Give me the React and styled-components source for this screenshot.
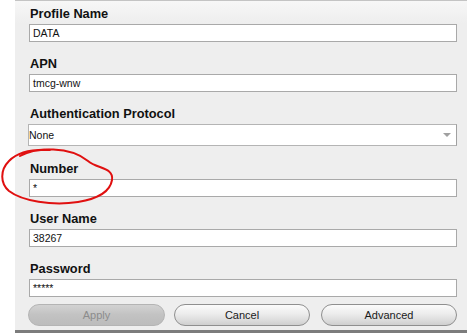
import React from "react";
import styled, { createGlobalStyle } from "styled-components";

const Global = createGlobalStyle`
  html, body { margin: 0; padding: 0; background: #ffffff; }
  body { font-family: "Liberation Sans", Arial, sans-serif; }
`;

const Screen = styled.div`
  position: relative;
  width: 467px;
  height: 336px;
  display: flex;
  background: #ffffff;
  overflow: hidden;
`;

const Gutter = styled.div`
  width: 15px;
  flex: none;
  background: #ffffff;
`;

const Panel = styled.div`
  flex: 1;
  height: 333px;
  box-sizing: border-box;
  border-top: 1px solid #c4c4c4;
  border-bottom: 3px solid #7c7c7c;
  background: linear-gradient(#f7f7f7 0px, #eeeeee 22px, #eeeeee 100%);
  padding: 5px 10px 0 13px;
  display: flex;
  flex-direction: column;
`;

const Field = styled.div`
  display: flex;
  flex-direction: column;
  margin-bottom: ${(p) => p.$gap}px;
`;

const Label = styled.div`
  font-family: "Liberation Sans", Arial, sans-serif;
  font-weight: bold;
  font-size: 12.8px;
  line-height: 16px;
  color: #111111;
  padding-left: 2px;
  margin-bottom: 2px;
`;

const Input = styled.div`
  height: 18px;
  box-sizing: border-box;
  margin-left: 1px;
  background: #ffffff;
  border: 1px solid #a9a9a9;
  font-family: "Liberation Sans", Arial, sans-serif;
  font-size: 10.5px;
  line-height: 16px;
  color: #111111;
  padding-left: 3px;
`;

const Select = styled.div`
  height: 22px;
  box-sizing: border-box;
  background: #ffffff;
  border: 1px solid #b4b4b4;
  border-right-color: #a0a0a0;
  display: flex;
  align-items: center;
  justify-content: space-between;
  font-family: "Liberation Sans", Arial, sans-serif;
  font-size: 10.5px;
  color: #111111;
  padding: 0 5px 0 0;
`;

const Arrow = styled.span`
  width: 0;
  height: 0;
  border-left: 4px solid transparent;
  border-right: 4px solid transparent;
  border-top: 4px solid #a0a0a0;
`;

const ButtonRow = styled.div`
  display: flex;
  margin-top: 7px;
`;

const Button = styled.div`
  width: ${(p) => p.$w}px;
  margin-left: ${(p) => p.$ml || 0}px;
  height: 22px;
  box-sizing: border-box;
  border-radius: 11px;
  border: 1px solid ${(p) => (p.$disabled ? "#b4b4b4" : "#8f8f8f")};
  background: ${(p) =>
    p.$disabled
      ? "linear-gradient(#d2d2d2, #c2c2c2 50%, #bcbcbc)"
      : "linear-gradient(#fbfbfb, #ececec 45%, #dadada 80%, #cfcfcf)"};
  display: flex;
  align-items: center;
  justify-content: center;
  font-family: "Liberation Sans", Arial, sans-serif;
  font-size: 11px;
  color: ${(p) => (p.$disabled ? "#8c8c8c" : "#1a1a1a")};
`;

const Annotation = styled.svg`
  position: absolute;
  left: 0;
  top: 0;
  pointer-events: none;
`;

export default function App() {
  return (
    <Screen>
      <Global />
      <Gutter />
      <Panel>
        <Field $gap={14}>
          <Label>Profile Name</Label>
          <Input>DATA</Input>
        </Field>
        <Field $gap={14}>
          <Label>APN</Label>
          <Input>tmcg-wnw</Input>
        </Field>
        <Field $gap={15}>
          <Label>Authentication Protocol</Label>
          <Select>
            <span>None</span>
            <Arrow />
          </Select>
        </Field>
        <Field $gap={14}>
          <Label>Number</Label>
          <Input>*</Input>
        </Field>
        <Field $gap={14}>
          <Label>User Name</Label>
          <Input>38267</Input>
        </Field>
        <Field $gap={0}>
          <Label>Password</Label>
          <Input>*****</Input>
        </Field>
        <ButtonRow>
          <Button $w={137} $disabled>Apply</Button>
          <Button $w={136} $ml={9}>Cancel</Button>
          <Button $w={136} $ml={11}>Advanced</Button>
        </ButtonRow>
      </Panel>
      <Annotation width="467" height="336" viewBox="0 0 467 336">
        <path
          d="M 20 156 C 36 147, 70 146, 88 161 C 97 169, 114 167, 112 180 C 110 193, 96 199, 78 202 C 52 206, 22 201, 9 191 C 0 183, 0 170, 9 161 C 17 153, 32 149, 50 150"
          fill="none"
          stroke="#e01010"
          strokeWidth="2"
          strokeLinecap="round"
        />
      </Annotation>
    </Screen>
  );
}
